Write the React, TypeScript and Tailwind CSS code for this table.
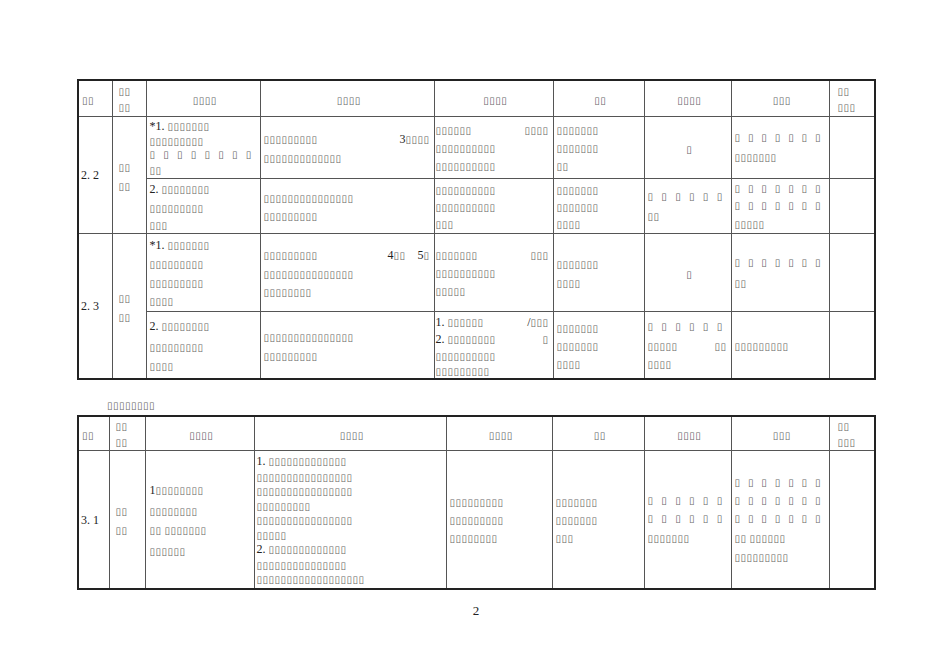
import React from 'react';

// a line starting with "~" is spread out (justified), "|" splits a line into left / right parts
type CellData = {
  lines: string[];
  lh?: string;
  align?: 'left' | 'center';
  rowSpan?: number;
  pad?: string;
};

const Run = ({ text }: { text: string }) => (
  <>
    {Array.from(text).map((ch, i) =>
      ch === '□' ? (
        <span
          key={i}
          className="inline-block w-[6px] font-['DejaVu_Sans'] text-[10px] leading-none text-[#666] align-baseline"
        >
          ▯
        </span>
      ) : (
        <span key={i} className="font-['Liberation_Serif'] text-[12px] text-[#222]">
          {ch}
        </span>
      )
    )}
  </>
);

const TextLine = ({ line }: { line: string }) => {
  if (line.startsWith('~')) {
    return (
      <div className="flex">
        {Array.from(line.slice(1)).map((_, i) => (
          <span
            key={i}
            className="inline-block w-[14px] font-['DejaVu_Sans'] text-[10px] text-[#666]"
          >
            ▯
          </span>
        ))}
      </div>
    );
  }
  if (line.includes('|')) {
    const [a, b] = line.split('|');
    return (
      <div className="flex justify-between pr-[4px]">
        <span className="whitespace-pre">
          <Run text={a} />
        </span>
        <span className="whitespace-pre">
          <Run text={b} />
        </span>
      </div>
    );
  }
  return (
    <div className="whitespace-pre">
      <Run text={line} />
    </div>
  );
};

const Cell = ({ lines, lh = 'leading-[17px]', align = 'left', rowSpan, pad = 'pl-[3px]' }: CellData) => (
  <td
    rowSpan={rowSpan}
    className={`border border-[#555] p-0 align-middle ${pad} ${align === 'center' ? 'text-center' : 'text-left'}`}
  >
    <div className={lh}>
      {lines.map((l, i) => (
        <TextLine key={i} line={l} />
      ))}
    </div>
  </td>
);

const HeaderRow = ({ h }: { h: string }) => (
  <tr className={h}>
    <Cell lines={['□□']} />
    <Cell lines={['□□', '□□']} lh="leading-[16px]" pad="pl-[6px]" />
    <Cell lines={['□□□□']} align="center" />
    <Cell lines={['□□□□']} align="center" />
    <Cell lines={['□□□□']} align="center" />
    <Cell lines={['□□']} align="center" />
    <Cell lines={['□□□□']} align="center" />
    <Cell lines={['□□□']} align="center" />
    <Cell lines={['□□', '□□□']} lh="leading-[16px]" pad="pl-[8px]" />
  </tr>
);

const Table = ({ widths, children }: { widths: string[]; children: React.ReactNode }) => (
  <table className="table-fixed border-collapse border-2 border-[#222] w-[798px]">
    <colgroup>
      {widths.map((w, i) => (
        <col key={i} className={w} />
      ))}
    </colgroup>
    <tbody>{children}</tbody>
  </table>
);

export default function App() {
  return (
    <div className="w-[950px] h-[672px] bg-white pl-[77px] pt-[79px] font-['Liberation_Serif']">
      <Table
        widths={['w-[34px]', 'w-[34px]', 'w-[114px]', 'w-[174px]', 'w-[119px]', 'w-[91px]', 'w-[87px]', 'w-[98px]', 'w-[46px]']}
      >
        <HeaderRow h="h-[36px]" />

        {/* 2.2 */}
        <tr className="h-[62px]">
          <Cell rowSpan={2} lines={['2. 2']} pad="pl-[2px]" />
          <Cell rowSpan={2} lines={['□□', '□□']} lh="leading-[19px]" pad="pl-[6px]" />
          <Cell lines={['*1. □□□□□□□', '□□□□□□□□□', '~□□□□□□□□', '□□']} lh="leading-[14.5px]" />
          <Cell lines={['□□□□□□□□□|3□□□□', '□□□□□□□□□□□□□']} lh="leading-[18px]" />
          <Cell lines={['□□□□□□|□□□□', '□□□□□□□□□□', '□□□□□□□□□□']} lh="leading-[18px]" pad="pl-[1px]" />
          <Cell lines={['□□□□□□□', '□□□□□□□', '□□']} lh="leading-[18px]" />
          <Cell lines={['□']} align="center" />
          <Cell lines={['~□□□□□□□', '□□□□□□□']} lh="leading-[18px]" />
          <Cell lines={[]} />
        </tr>
        <tr className="h-[55px]">
          <Cell lines={['2. □□□□□□□□', '□□□□□□□□□', '□□□']} lh="leading-[17px]" />
          <Cell lines={['□□□□□□□□□□□□□□□', '□□□□□□□□□']} lh="leading-[18px]" />
          <Cell lines={['□□□□□□□□□□', '□□□□□□□□□□', '□□□']} lh="leading-[17px]" pad="pl-[1px]" />
          <Cell lines={['□□□□□□□', '□□□□□□□', '□□□□']} lh="leading-[17px]" />
          <Cell lines={['~□□□□□□', '□□']} lh="leading-[18px]" />
          <Cell lines={['~□□□□□□□', '~□□□□□□□', '□□□□□']} lh="leading-[17px]" />
          <Cell lines={[]} />
        </tr>

        {/* 2.3 */}
        <tr className="h-[78px]">
          <Cell rowSpan={2} lines={['2. 3']} pad="pl-[2px]" />
          <Cell rowSpan={2} lines={['□□', '□□']} lh="leading-[19px]" pad="pl-[6px]" />
          <Cell lines={['*1. □□□□□□□', '□□□□□□□□□', '□□□□□□□□□', '□□□□']} lh="leading-[18.5px]" />
          <Cell lines={['□□□□□□□□□|4□□    5□', '□□□□□□□□□□□□□□□', '□□□□□□□□']} lh="leading-[18px]" />
          <Cell lines={['□□□□□□□|□□□', '□□□□□□□□□□', '□□□□□']} lh="leading-[18px]" pad="pl-[1px]" />
          <Cell lines={['□□□□□□□', '□□□□']} lh="leading-[19px]" />
          <Cell lines={['□']} align="center" />
          <Cell lines={['~□□□□□□□', '□□']} lh="leading-[19px]" />
          <Cell lines={[]} />
        </tr>
        <tr className="h-[68px]">
          <Cell lines={['2. □□□□□□□□', '□□□□□□□□□', '□□□□']} lh="leading-[19px]" />
          <Cell lines={['□□□□□□□□□□□□□□□', '□□□□□□□□□']} lh="leading-[19px]" />
          <Cell lines={['1. □□□□□□|/□□□', '2. □□□□□□□□|□', '□□□□□□□□□□', '□□□□□□□□□']} lh="leading-[15px]" pad="pl-[1px]" />
          <Cell lines={['□□□□□□□', '□□□□□□□', '□□□□']} lh="leading-[18px]" />
          <Cell lines={['~□□□□□□', '□□□□□|□□', '□□□□']} lh="leading-[18px]" />
          <Cell lines={['□□□□□□□□□']} />
          <Cell lines={[]} />
        </tr>
      </Table>

      <div className="pl-[30px] pt-[17px] pb-[4px] leading-[14px]">
        <Run text="□□□□□□□□" />
      </div>

      <Table
        widths={['w-[31px]', 'w-[36px]', 'w-[109px]', 'w-[192px]', 'w-[106px]', 'w-[92px]', 'w-[87px]', 'w-[98px]', 'w-[46px]']}
      >
        <HeaderRow h="h-[34px]" />
        <tr className="h-[139px]">
          <Cell lines={['3. 1']} pad="pl-[2px]" />
          <Cell lines={['□□', '□□']} lh="leading-[19px]" pad="pl-[6px]" />
          <Cell lines={['1□□□□□□□□', '□□□□□□□□', '□□ □□□□□□□', '□□□□□□']} lh="leading-[19px]" pad="pl-[4px]" />
          <Cell
            lines={[
              '1. □□□□□□□□□□□□□',
              '□□□□□□□□□□□□□□□□',
              '□□□□□□□□□□□□□□□□',
              '□□□□□□□□□',
              '□□□□□□□□□□□□□□□□',
              '□□□□□',
              '2. □□□□□□□□□□□□□',
              '□□□□□□□□□□□□□□□',
              '□□□□□□□□□□□□□□□□□□',
            ]}
            lh="leading-[14.5px]"
            pad="pl-[2px]"
          />
          <Cell lines={['□□□□□□□□□', '□□□□□□□□□', '□□□□□□□□']} lh="leading-[18px]" />
          <Cell lines={['□□□□□□□', '□□□□□□□', '□□□']} lh="leading-[18px]" />
          <Cell lines={['~□□□□□□', '~□□□□□□', '□□□□□□□']} lh="leading-[18px]" />
          <Cell lines={['~□□□□□□□', '~□□□□□□□', '~□□□□□□□', '□□ □□□□□□', '□□□□□□□□□']} lh="leading-[18px]" />
          <Cell lines={[]} />
        </tr>
      </Table>

      <div className="w-[798px] pt-[11px] text-center font-['Liberation_Serif'] text-[13px] text-[#222]">2</div>
    </div>
  );
}
